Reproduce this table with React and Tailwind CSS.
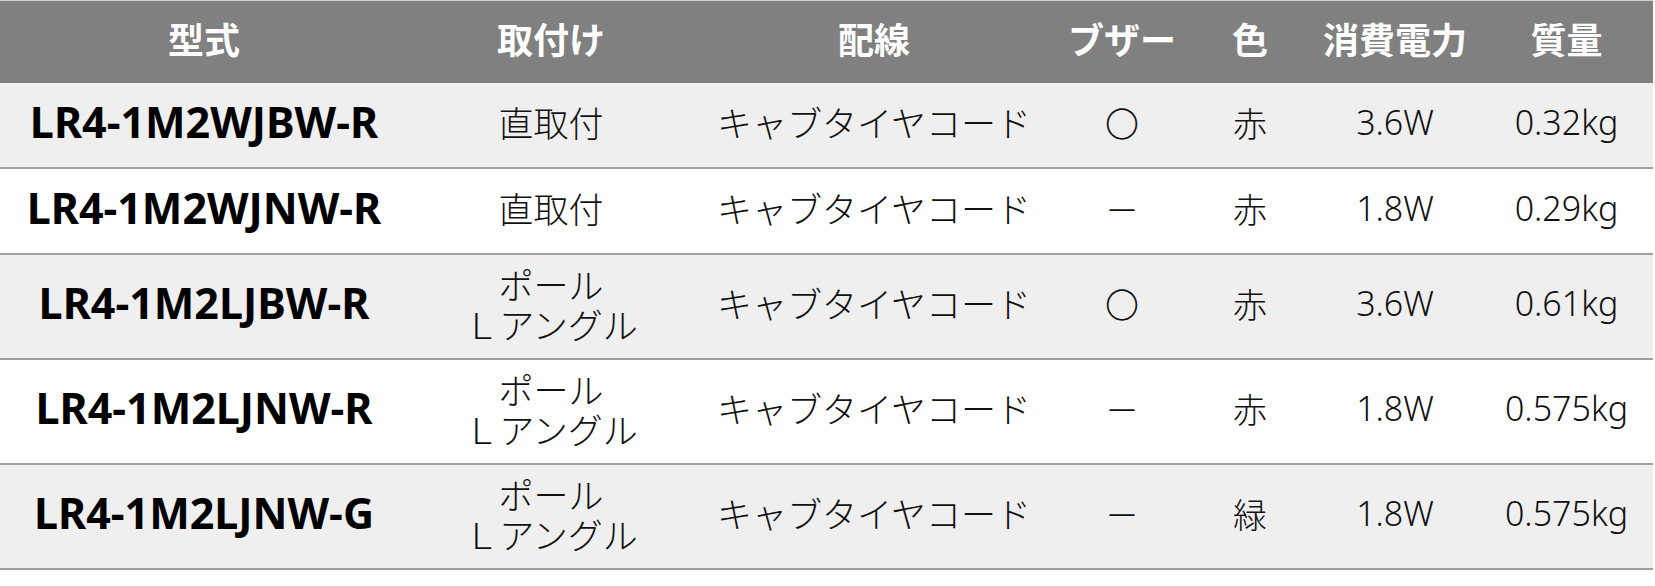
import React from "react";

const cols = "grid grid-cols-[408px_286px_360px_136px_120px_170px_173px]";

const rows = [
  { model: "LR4-1M2WJBW-R", mount: ["直取付"], buzzer: "〇", color: "赤", power: "3.6W", mass: "0.32kg", tall: false, bg: "bg-[#efefef]" },
  { model: "LR4-1M2WJNW-R", mount: ["直取付"], buzzer: "－", color: "赤", power: "1.8W", mass: "0.29kg", tall: false, bg: "bg-white" },
  { model: "LR4-1M2LJBW-R", mount: ["ポール", "Ｌアングル"], buzzer: "〇", color: "赤", power: "3.6W", mass: "0.61kg", tall: true, bg: "bg-[#efefef]" },
  { model: "LR4-1M2LJNW-R", mount: ["ポール", "Ｌアングル"], buzzer: "－", color: "赤", power: "1.8W", mass: "0.575kg", tall: true, bg: "bg-white" },
  { model: "LR4-1M2LJNW-G", mount: ["ポール", "Ｌアングル"], buzzer: "－", color: "緑", power: "1.8W", mass: "0.575kg", tall: true, bg: "bg-[#efefef]" },
];

const headers = ["型式", "取付け", "配線", "ブザー", "色", "消費電力", "質量"];

export default function App() {
  return (
    <div className="w-[1655px] h-[586px] bg-white font-['Noto_Sans','Noto_Sans_CJK_JP',sans-serif] overflow-hidden">
      <div className="w-[1653px] border-t border-[#d0d0d0]">
        <div className={`${cols} h-[82px] bg-[#808080] text-white font-bold text-[36px] font-['Noto_Sans_CJK_JP',sans-serif]`}>
          {headers.map((h) => (
            <div key={h} className="flex items-center justify-center leading-none pb-[8px]">
              {h}
            </div>
          ))}
        </div>
        {rows.map((r) => (
          <div
            key={r.model + r.mass}
            className={`${cols} ${r.tall ? "h-[105px]" : "h-[86px]"} ${r.bg} border-b-2 border-[#a0a0a0] text-[#111] text-[34px] font-light`}
          >
            <div className="flex items-center justify-center font-bold text-[43px] text-black pb-[6px] font-['Noto_Sans',sans-serif]">
              {r.model}
            </div>
            <div className="flex flex-col items-center justify-center pb-[6px] font-['Noto_Sans_CJK_JP',sans-serif] text-[35px] leading-[40px]">
              {r.mount.map((m) => (
                <span key={m} className="block h-[40px] leading-[40px]">{m}</span>
              ))}
            </div>
            <div className="flex items-center justify-center pb-[6px] font-['Noto_Sans_CJK_JP',sans-serif] text-[35px]">キャブタイヤコード</div>
            <div className="flex items-center justify-center pb-[6px] font-['Noto_Sans_CJK_JP',sans-serif]">{r.buzzer}</div>
            <div className="flex items-center justify-center pb-[6px] font-['Noto_Sans_CJK_JP',sans-serif]">{r.color}</div>
            <div className="flex items-center justify-center pb-[6px]">{r.power}</div>
            <div className="flex items-center justify-center pb-[6px]">{r.mass}</div>
          </div>
        ))}
      </div>
    </div>
  );
}
